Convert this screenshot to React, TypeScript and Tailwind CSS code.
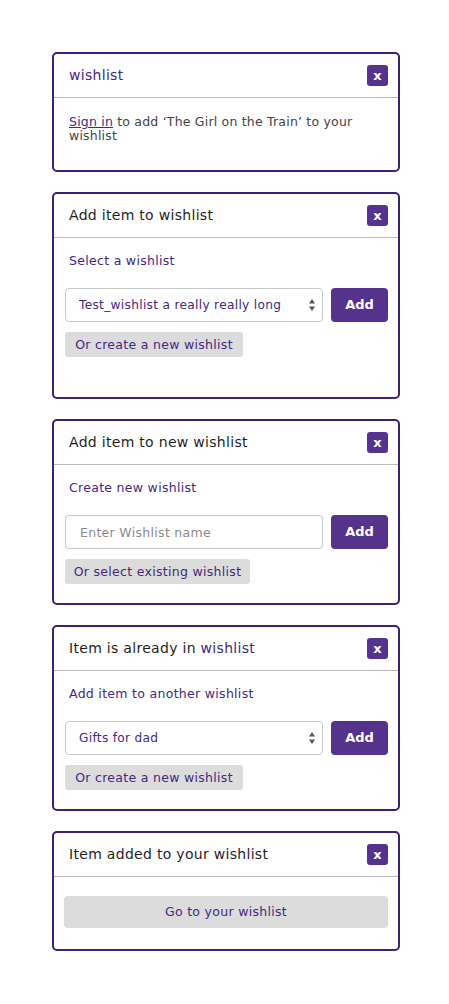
import React from "react";

const purple = "text-[#44287f]";

const CloseButton: React.FC = () => (
    <button className="w-[21px] h-[21px] rounded-[3px] bg-[#55338c] text-white text-[13px] font-bold leading-none flex items-center justify-center">
        x
    </button>
);

const Card: React.FC<{ title: React.ReactNode; children: React.ReactNode; bodyClass?: string }> = ({ title, children, bodyClass }) => (
    <div className="w-[348px] border-2 border-[#3b1f78] rounded-[5px] bg-white">
        <div className="h-[44px] flex items-center justify-between pl-[15px] pr-[10px] border-b border-[#bdbdbd]">
            <div className="text-[14px] text-[#1f1f1f] tracking-[0.3px]">{title}</div>
            <CloseButton />
        </div>
        <div className={bodyClass}>{children}</div>
    </div>
);

const Chevrons: React.FC = () => (
    <svg width="8" height="14" viewBox="0 0 8 14" className="shrink-0">
        <path d="M4 1 L7 5.5 L1 5.5 Z" fill="#555" />
        <path d="M4 13 L7 8.5 L1 8.5 Z" fill="#555" />
    </svg>
);

const AddButton: React.FC = () => (
    <button className="w-[57px] h-[34px] rounded-[4px] bg-[#55338c] text-white text-[13px] font-bold">
        Add
    </button>
);

const GreyButton: React.FC<{ label: string; width: string }> = ({ label, width }) => (
    <button className={`${width} h-[25px] rounded-[3px] bg-[#dcdcdc] ${purple} text-[12.5px] leading-[15px] tracking-[0.3px] text-center`}>
        {label}
    </button>
);

const SelectRow: React.FC<{ value: string }> = ({ value }) => (
    <div className="flex gap-[8px] items-center">
        <div className="w-[258px] h-[34px] border border-[#c8c8c8] rounded-[4px] flex items-center justify-between pl-[13px] pr-[6px]">
            <span className={`${purple} text-[12.2px] tracking-[0.3px] whitespace-nowrap overflow-hidden`}>{value}</span>
            <Chevrons />
        </div>
        <AddButton />
    </div>
);

const Label: React.FC<{ text: string }> = ({ text }) => (
    <div className={`${purple} text-[12.5px] leading-[15px] tracking-[0.3px] pl-[4px] mb-[20px]`}>{text}</div>
);

const App: React.FC = () => {
    return (
        <div className="min-h-screen bg-white flex flex-col items-start pl-[52px] pt-[52px] gap-[20px] font-['DejaVu_Sans',Verdana,sans-serif]">
            <Card title={<span className={purple}>wishlist</span>} bodyClass="px-[15px] pt-[17px] pb-[27px] text-[12.5px] leading-[14px] text-[#444] tracking-[0.2px]">
                <p>
                    <span className={`${purple} underline`}>Sign in</span> to add ‘The Girl on the Train’ to your wishlist
                </p>
            </Card>

            <Card title="Add item to wishlist" bodyClass="pl-[11px] pr-[10px] pt-[15px] pb-[40px]">
                <Label text="Select a wishlist" />
                <SelectRow value="Test_wishlist a really really long" />
                <div className="mt-[10px] flex">
                    <GreyButton label="Or create a new wishlist" width="w-[178px]" />
                </div>
            </Card>

            <Card title="Add item to new wishlist" bodyClass="pl-[11px] pr-[10px] pt-[15px] pb-[19px]">
                <Label text="Create new wishlist" />
                <div className="flex gap-[8px] items-center">
                    <input
                        className="w-[258px] h-[34px] border border-[#c8c8c8] rounded-[4px] pl-[14px] text-[12.5px] tracking-[0.3px] placeholder:text-[#8a8a8a] outline-none"
                        placeholder="Enter Wishlist name"
                    />
                    <AddButton />
                </div>
                <div className="mt-[10px] flex">
                    <GreyButton label="Or select existing wishlist" width="w-[185px]" />
                </div>
            </Card>

            <Card title={<>Item is already in <span className={purple}>wishlist</span></>} bodyClass="pl-[11px] pr-[10px] pt-[15px] pb-[19px]">
                <Label text="Add item to another wishlist" />
                <SelectRow value="Gifts for dad" />
                <div className="mt-[10px] flex">
                    <GreyButton label="Or create a new wishlist" width="w-[178px]" />
                </div>
            </Card>

            <Card title="Item added to your wishlist" bodyClass="pl-[10px] pr-[10px] pt-[19px] pb-[21px]">
                <button className={`w-full h-[32px] rounded-[4px] bg-[#dcdcdc] ${purple} text-[12.5px] tracking-[0.3px]`}>
                    Go to your wishlist
                </button>
            </Card>
        </div>
    );
};

export default App;
